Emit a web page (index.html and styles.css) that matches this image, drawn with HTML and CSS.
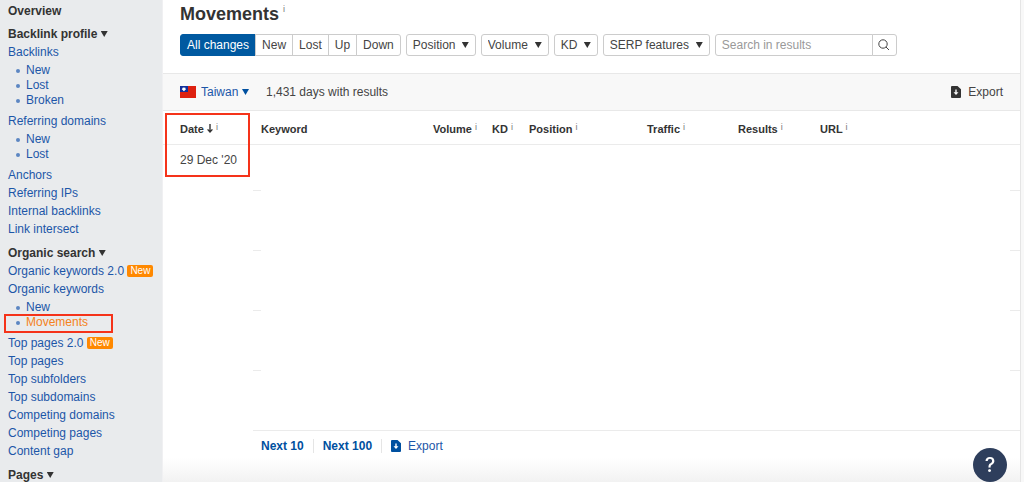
FILE: index.html
```html
<!DOCTYPE html>
<html lang="en">
<head>
<meta charset="utf-8">
<title>Movements</title>
<link rel="stylesheet" href="styles.css">
</head>
<body>
<svg class="defs" aria-hidden="true">
  <symbol id="file" viewBox="0 0 10 12"><path fill="currentColor" fill-rule="evenodd" d="M1 0h5.500L10 3.200V11a1 1 0 0 1-1 1H1a1 1 0 0 1-1-1V1a1 1 0 0 1 1-1zM4.300 3.500V6.200H2.500L5 9l2.500-2.800H5.700V3.500z"/></symbol>
</svg>
<div class="layout">
  <nav class="sidebar">
    <h2 class="group">Overview</h2>
    <h2 class="group">Backlink profile <i class="caret"></i></h2>
    <a href="#">Backlinks</a>
    <ul>
      <li><a href="#">New</a></li>
      <li><a href="#">Lost</a></li>
      <li><a href="#">Broken</a></li>
    </ul>
    <a href="#">Referring domains</a>
    <ul>
      <li><a href="#">New</a></li>
      <li><a href="#">Lost</a></li>
    </ul>
    <a href="#">Anchors</a>
    <a href="#">Referring IPs</a>
    <a href="#">Internal backlinks</a>
    <a href="#">Link intersect</a>
    <h2 class="group">Organic search <i class="caret"></i></h2>
    <a href="#">Organic keywords 2.0 <span class="badge">New</span></a>
    <a href="#">Organic keywords</a>
    <ul>
      <li><a href="#">New</a></li>
      <li class="marked"><a class="current" href="#">Movements</a></li>
    </ul>
    <a href="#">Top pages 2.0 <span class="badge">New</span></a>
    <a href="#">Top pages</a>
    <a href="#">Top subfolders</a>
    <a href="#">Top subdomains</a>
    <a href="#">Competing domains</a>
    <a href="#">Competing pages</a>
    <a href="#">Content gap</a>
    <h2 class="group">Pages <i class="caret"></i></h2>
  </nav>
  <main class="main">
    <header class="head">
      <h1>Movements<sup>i</sup></h1>
      <div class="filters">
        <div class="segments">
          <button class="active">All changes</button><button>New</button><button>Lost</button><button>Up</button><button>Down</button>
        </div>
        <label class="drop"><select aria-label="Position"><option>Position</option></select><i class="caret"></i></label>
        <label class="drop"><select aria-label="Volume"><option>Volume</option></select><i class="caret"></i></label>
        <label class="drop"><select aria-label="KD"><option>KD</option></select><i class="caret"></i></label>
        <label class="drop"><select aria-label="SERP features"><option>SERP features</option></select><i class="caret"></i></label>
        <form class="search">
          <input type="text" placeholder="Search in results" aria-label="Search in results">
          <button type="button" aria-label="Search"><svg width="12" height="12" viewBox="0 0 12 12" fill="none" stroke="#444"><circle cx="5" cy="5" r="4.200"/><path d="M8 8l3 3"/></svg></button>
        </form>
      </div>
    </header>
    <div class="bar">
      <svg class="flag" width="16" height="12" viewBox="0 0 16 12"><path fill="#de2110" d="M0 0h16v12H0z"/><path fill="#12309b" d="M0 0h8v6H0z"/><path fill="#fff" d="M4 .8l.6 1.100 1.200-.2-.5 1.200.8.900-1.200.3-.2 1.100L4 4.500l-.9.700-.2-1.100-1.200-.3.800-.9L2 1.700l1.300.2z"/></svg>
      <label class="country"><select aria-label="Country"><option>Taiwan</option></select><i class="caret"></i></label>
      <span>1,431 days with results</span>
      <button class="export"><svg width="10" height="12"><use href="#file"/></svg>Export</button>
    </div>
    <div class="results">
      <table>
        <colgroup><col class="c-date"><col class="c-edge"><col class="c-keyword"><col class="c-volume"><col class="c-kd"><col class="c-position"><col class="c-traffic"><col class="c-results"><col><col class="c-end"></colgroup>
        <thead>
          <tr><th class="date">Date <svg width="6" height="9" viewBox="0 0 6 9" fill="none" stroke="#333" stroke-width="1.400"><path d="M3 0v8M.6 5.400L3 8l2.400-2.600"/></svg><sup>i</sup></th><th></th><th>Keyword</th><th>Volume<sup>i</sup></th><th>KD<sup>i</sup></th><th>Position<sup>i</sup></th><th>Traffic<sup>i</sup></th><th>Results<sup>i</sup></th><th>URL<sup>i</sup></th><th></th></tr>
        </thead>
        <tbody>
          <tr class="first"><td class="date" rowspan="5">29 Dec '20</td><td class="edge"></td><td colspan="7"></td><td class="edge"></td></tr>
          <tr><td class="edge"></td><td colspan="7"></td><td class="edge"></td></tr>
          <tr><td class="edge"></td><td colspan="7"></td><td class="edge"></td></tr>
          <tr><td class="edge"></td><td colspan="7"></td><td class="edge"></td></tr>
          <tr class="last"><td class="edge"></td><td class="edge" colspan="7"></td><td class="edge"></td></tr>
        </tbody>
      </table>
    </div>
    <footer class="pager">
      <a class="next" href="#">Next 10</a>
      <a class="next" href="#">Next 100</a>
      <a class="export" href="#"><svg width="10" height="12"><use href="#file"/></svg>Export</a>
    </footer>
  </main>
</div>
<button class="help" aria-label="Help">?</button>
</body>
</html>
```
FILE: styles.css
```css
* { box-sizing: border-box; }
body {
  margin: 0;
  height: 100vh;
  overflow: hidden;
  background: #f8f8f8;
  color: #444;
  font: 12px/18px "Liberation Sans", Arial, sans-serif;
}
a { color: #1c56a8; text-decoration: none; }
button, input, select { font: inherit; color: inherit; margin: 0; }
.defs { display: none; }
.layout { display: flex; height: 100vh; }

.caret {
  display: inline-block;
  width: 7px;
  height: 6px;
  background: #333;
  clip-path: polygon(0 0, 100% 0, 50% 100%);
  vertical-align: 1px;
}

.sidebar {
  flex: none;
  width: 163px;
  padding: 2px 8px 0;
  background: #e9ebed;
  border-right: 1px solid #f0f0f2;
  overflow: hidden;
}
.sidebar > a { display: block; white-space: nowrap; }
.group { margin: 0; font-size: 12px; line-height: 18px; color: #333; }
.group + .group { margin-top: 5px; }
a + .group { margin-top: 6px; }
.sidebar ul { margin: 2px 0 4px; padding: 0; list-style: none; line-height: 15px; }
.sidebar li { position: relative; display: flex; align-items: center; gap: 6px; padding-left: 8px; }
.sidebar li::before { content: ""; width: 4px; height: 4px; border-radius: 50%; background: #5c86c2; }
.sidebar .current { color: #f58220; }
.marked::after {
  content: "";
  position: absolute;
  inset: -1px 41px -3px -4px;
  border: 2px solid #f5331a;
}
.badge {
  display: inline-block;
  padding: 0 3px;
  border-radius: 2px;
  background: #ff8800;
  color: #fff;
  font-size: 10px;
  line-height: 12px;
  vertical-align: 1px;
}

.main {
  flex: 1;
  min-width: 0;
  margin-right: 3px;
  border-right: 1px solid #e5e5e5;
  background: linear-gradient(#fff, #fff calc(100% - 24px), #f2f2f2);
}
.head { padding: 3px 17px 17px; }
h1 { margin: 0 0 9px; font-size: 18px; line-height: 22px; color: #333; }
sup {
  margin-left: 3px;
  color: #777;
  font-size: 9px;
  font-weight: normal;
  line-height: 8px;
  vertical-align: 3px;
}
h1 sup { margin-left: 4px; vertical-align: 8px; }
.filters { display: flex; gap: 5px; }
.segments { display: flex; }
.segments button, .drop select, .search input, .search button {
  height: 22px;
  border: 1px solid #ccc;
  background: #fff;
}
.segments button { margin-left: -1px; padding: 0 6px; }
.segments button:first-child { margin-left: 0; border-radius: 3px 0 0 3px; }
.segments button:last-child { border-radius: 0 3px 3px 0; }
.segments .active { background: #0059a0; border-color: #0059a0; color: #fff; }
.drop, .country { position: relative; }
select { appearance: none; }
.drop select { padding: 0 19px 0 6px; border-radius: 3px; }
.drop .caret { position: absolute; right: 7px; top: 8px; pointer-events: none; }
.search { display: flex; }
.search input { width: 158px; padding: 0 6px; border-radius: 3px 0 0 3px; }
.search input::placeholder { color: #999; }
.search button { display: grid; place-items: center; width: 25px; margin-left: -1px; padding: 0; border-radius: 0 3px 3px 0; }

.bar {
  display: flex;
  align-items: center;
  height: 38px;
  padding: 0 17px;
  background: #f8f8f8;
  border-top: 1px solid #e8e8e8;
  border-bottom: 1px solid #e8e8e8;
}
.country { margin: 0 17px 0 5px; color: #1c56a8; }
.country select { padding: 0 10px 0 0; border: 0; background: none; }
.country .caret { position: absolute; right: 0; top: 6px; background: #0050a0; pointer-events: none; }
.export { display: flex; align-items: center; gap: 7px; padding: 0; border: 0; background: none; }
.bar .export { margin-left: auto; }
.bar .export svg { color: #333; }

.results { position: relative; }
.results::after {
  content: "";
  position: absolute;
  left: 2px;
  top: 2px;
  width: 81px;
  height: 60px;
  border: 2px solid #f5331a;
}
table { width: 100%; table-layout: fixed; border-collapse: separate; border-spacing: 0; }
th, td { padding: 0; text-align: left; }
th { height: 34px; padding-top: 3px; border-bottom: 1px solid #ebebeb; color: #333; font-size: 11px; white-space: nowrap; }
td { height: 60px; }
.first td { height: 46px; }
.date { padding-left: 17px; }
td.date { padding-top: 6px; vertical-align: top; }
.edge { border-bottom: 1px solid #ebebeb; }
.c-date { width: 90px; }
.c-edge { width: 8px; }
.c-keyword { width: 172px; }
.c-volume { width: 59px; }
.c-kd { width: 37px; }
.c-position { width: 118px; }
.c-traffic { width: 91px; }
.c-results { width: 82px; }
.c-end { width: 10px; }

.pager { display: flex; align-items: center; padding: 8px 0 0 98px; line-height: 14px; }
.next { padding-right: 9px; margin-right: 9px; border-right: 1px solid #e5e5e5; color: #0050a0; font-weight: bold; }
.pager .export svg { color: #0050a0; }

.help {
  position: fixed;
  right: 17px;
  bottom: 0;
  width: 34px;
  height: 34px;
  padding: 0;
  border: 0;
  border-radius: 50%;
  background: #2e3e5c;
  color: #fff;
  font: 500 20px/34px Inter, sans-serif;
}
```
